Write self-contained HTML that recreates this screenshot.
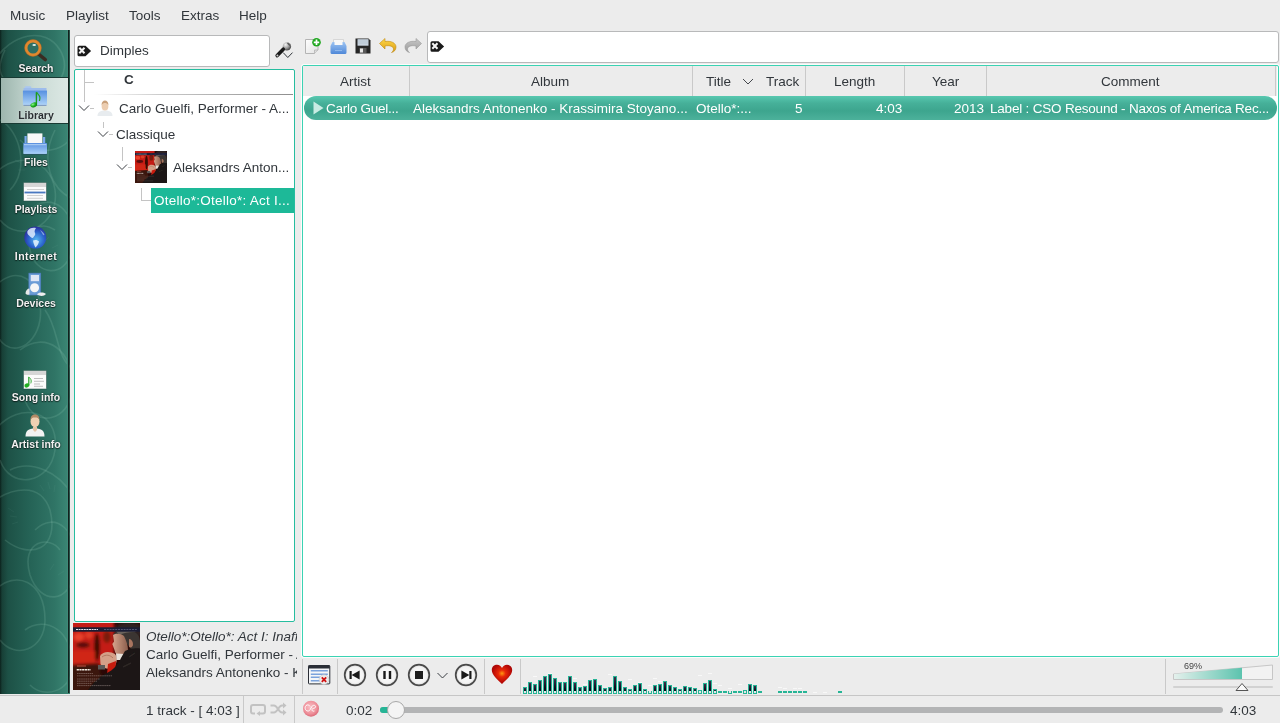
<!DOCTYPE html>
<html><head><meta charset="utf-8">
<style>
*{box-sizing:border-box;margin:0;padding:0}
html,body{width:1280px;height:723px;overflow:hidden;background:#ececec;font-family:"Liberation Sans",sans-serif;color:#31363b;font-size:13.5px}
.a{position:absolute;white-space:nowrap}
svg{position:absolute;overflow:visible}
#menu span{position:absolute;top:8px;font-size:13.5px;color:#31363b;line-height:16px}
#side{position:absolute;left:0;top:30px;width:70px;height:664px;background:linear-gradient(90deg,#0c211c 0px,#173f36 2px,#1d5146 8px,#256356 30px,#307566 55px,#3a8573 67px);overflow:hidden}
.si{position:absolute;left:1.5px;width:69px;text-align:center;color:#f2f2f2;font-weight:bold;font-size:10.5px;line-height:12px;text-shadow:0 0 2px rgba(0,0,0,.7),0 1px 1px rgba(0,0,0,.5)}
.panel{position:absolute;background:#fff;border:1px solid #26bd9f;border-radius:2px}
.t{position:absolute;white-space:nowrap;font-size:13.5px;color:#31363b;line-height:16px}
.hd{position:absolute;top:74px;font-size:13.5px;line-height:16px;color:#31363b;white-space:nowrap}
.sep{position:absolute;background:#c9c9c9;width:1px}
.rw{position:absolute;top:101px;font-size:13.5px;line-height:16px;color:#fff;white-space:nowrap}
#an i{position:absolute;width:4px;display:block}
#an i.b{border:1px solid #26b596;border-bottom-width:1px;background:linear-gradient(180deg,#3a2f4a,#0b0818 70%)}
#an i.b:after{content:"";position:absolute;left:0;right:0;bottom:0;height:2px;background:#e6e6e6}
</style></head>
<body><div id="root" style="position:absolute;left:0;top:0;width:1280px;height:723px;background:#ececec;will-change:transform;overflow:hidden">
<div id="menu">
<span style="left:10px">Music</span>
<span style="left:66px">Playlist</span>
<span style="left:129px">Tools</span>
<span style="left:181px">Extras</span>
<span style="left:239px">Help</span>
</div>
<div id="side">
 <svg width="70" height="663" style="left:0;top:0" viewBox="0 0 70 663">
  <defs><filter id="pb"><feGaussianBlur stdDeviation=".45"/></filter></defs>
  <g fill="none" stroke="#a6dccb" stroke-opacity=".15" stroke-width="1.6" filter="url(#pb)">
   <path d="M-5 30 C10 5 45 -5 60 20 C75 45 50 70 20 60 C0 52 -5 40 5 20"/>
   <path d="M15 70 C30 50 70 60 75 90 C78 120 40 130 20 110"/>
   <path d="M-10 150 C10 120 50 125 55 160 C60 195 20 215 0 190"/>
   <path d="M30 180 C50 160 80 180 72 220 C65 250 35 245 30 220 C25 200 40 190 55 200"/>
   <path d="M-8 260 C15 230 45 250 40 290 C35 320 5 330 -5 300"/>
   <path d="M20 320 C45 300 75 320 72 360 C70 390 35 400 25 370"/>
   <path d="M-5 400 C20 370 60 380 55 420 C50 455 10 460 0 430"/>
   <path d="M10 440 C30 430 60 440 75 470 M-5 470 C10 460 40 450 50 480 C60 520 30 530 5 510"/>
   <path d="M35 500 C55 480 80 500 75 540 C70 575 40 575 30 545 C20 510 50 505 60 520"/>
   <path d="M-5 560 C15 540 45 550 45 590 C45 620 15 630 0 610"/>
   <path d="M25 600 C45 585 75 600 72 640 C70 660 45 670 30 655"/>
   <path d="M0 90 C20 100 30 140 10 160 M55 100 C40 130 50 160 75 170 M45 280 C60 300 55 330 75 340"/>
  </g>
  <g stroke="#a6dccb" stroke-opacity=".08" stroke-width=".8">
   <path d="M8 478 l6 4 M10 486 l7 1 M12 494 l6 -2 M40 455 l4 6 M48 452 l2 7 M55 455 l-1 7 M50 540 l4 -6 M58 545 l6 -4 M20 360 l6 4 M24 368 l7 1 M44 212 l5 -5 M52 218 l6 -3 M15 130 l6 3 M18 140 l7 0"/>
  </g>
  <rect x="67" y="0" width="1" height="663" fill="#3f8a78"/><rect x="68" y="0" width="1.5" height="663" fill="#13201d"/>
 </svg>
 <!-- selected Library -->
 <div style="position:absolute;left:1px;top:47px;width:67px;height:47px;background:linear-gradient(90deg,#9db6ae,#c9dad4 50%,#dce8e4);border-top:1px solid #183a33;border-bottom:1px solid #183a33"></div>
</div>

<!-- sidebar icons -->
<svg style="left:22px;top:38px" width="26" height="24" viewBox="0 0 26 24">
 <defs><linearGradient id="hg" x1="0" y1="0" x2="1" y2="0"><stop offset="0" stop-color="#6a5a48"/><stop offset="1" stop-color="#2a2018"/></linearGradient></defs>
 <line x1="16.5" y1="16" x2="23.3" y2="21.6" stroke="#3a2c22" stroke-width="3.4" stroke-linecap="round"/>
 <circle cx="11" cy="10" r="7" fill="#2f6f63" stroke="#e0882e" stroke-width="2.9"/>
 <circle cx="11" cy="10" r="8.4" fill="none" stroke="#b8601a" stroke-width=".6" opacity=".7"/>
 <ellipse cx="12.2" cy="6.9" rx="1.8" ry="1" fill="#f4fffc" opacity=".9"/>
</svg>
<div class="si" style="top:62px">Search</div>

<svg style="left:22px;top:85px" width="26" height="24" viewBox="0 0 26 24">
 <defs><linearGradient id="fg" x1="0" y1="0" x2="0" y2="1"><stop offset="0" stop-color="#5690e0"/><stop offset="1" stop-color="#acd2f8"/></linearGradient>
 <radialGradient id="ng" cx=".4" cy=".35" r=".7"><stop offset="0" stop-color="#8cf08c"/><stop offset=".5" stop-color="#22b822"/><stop offset="1" stop-color="#0a7a0a"/></radialGradient></defs>
 <rect x="2.8" y="1.2" width="6.5" height="4" rx="1" fill="#a9c6f0"/>
 <rect x="1.5" y="3" width="23" height="4" fill="#9dbcec"/>
 <rect x="0.9" y="5.6" width="24.1" height="14.3" fill="url(#fg)"/>
 <rect x="1.5" y="19.9" width="23" height="1" fill="#7c97bf"/>
 <path d="M14.4 7.2 v12.5" stroke="#1f9a1f" stroke-width="1.4"/>
 <path d="M14.4 7.2 c1 1.5 3.5 3 3.5 5.5 c0 1.2 -.3 2 -.5 3.3" stroke="#25a525" stroke-width="1.2" fill="none"/>
 <ellipse cx="11.7" cy="19.9" rx="3.4" ry="2.4" transform="rotate(-20 11.7 19.9)" fill="url(#ng)"/>
</svg>
<div class="si" style="top:109px;color:#2b2f33;text-shadow:0 0 2px rgba(255,255,255,.6)">Library</div>

<svg style="left:23px;top:132px" width="25" height="23" viewBox="0 0 25 23">
 <defs><linearGradient id="tg" x1="0" y1="0" x2="0" y2="1"><stop offset="0" stop-color="#5a90e0"/><stop offset="1" stop-color="#aad2fa"/></linearGradient></defs>
 <rect x="1.5" y="4" width="2.2" height="8" fill="#7aa8ec"/>
 <rect x="20" y="5" width="2.2" height="7" fill="#7aa8ec"/>
 <rect x="4.4" y="1.4" width="15" height="10" fill="#f8f8f8"/>
 <rect x="0.3" y="11.1" width="23.7" height="10.8" rx=".6" fill="url(#tg)"/>
 <rect x="1" y="12.2" width="22.3" height="1" fill="#b6d4f6"/>
 <rect x="0.8" y="21.9" width="23" height="1" fill="#2a4a6a" opacity=".5"/>
</svg>
<div class="si" style="top:156px">Files</div>

<svg style="left:23px;top:182px" width="24" height="20" viewBox="0 0 24 20">
 <rect x="0.5" y="0.5" width="23" height="18.5" fill="#fbfbfb" stroke="#1e4a40" stroke-opacity=".5" stroke-width="1"/>
 <rect x="1" y="1" width="22" height="4" fill="#d6d6d6"/>
 <path d="M4 7.5 h17 M4 13.5 h16 M4 16.3 h16" stroke="#c4c4c4" stroke-width=".8"/>
 <rect x="1.5" y="9.6" width="21" height="1.8" fill="#4a78c0"/>
</svg>
<div class="si" style="top:203px">Playlists</div>

<svg style="left:23px;top:225px" width="24" height="24" viewBox="0 0 24 24">
 <defs><radialGradient id="gl" cx=".55" cy=".6" r=".6"><stop offset="0" stop-color="#58b8f0"/><stop offset=".6" stop-color="#2a62cc"/><stop offset="1" stop-color="#2a2c9c"/></radialGradient>
 <filter id="gb"><feGaussianBlur stdDeviation=".5"/></filter></defs>
 <circle cx="12.3" cy="12.6" r="11" fill="url(#gl)"/>
 <g filter="url(#gb)" fill="#dfeeff" opacity=".85">
  <path d="M4.5 6 C6 3 10 2 13 3 C12 5 11 6 12 8 C13 10 11 11 10 13 C8 13 7 11 5.5 10 C4.5 9 4 7.5 4.5 6z"/>
  <path d="M10 15.5 C12 14.5 15 15 16 16.5 C15.5 19 14 21 12.5 22.5 C11.5 21 10.5 18.5 10 15.5z" fill="#eaf6ff"/>
  <path d="M17 5 C19 6 21 8 21.5 10 C20.5 10.5 19.5 9.5 19 8 z" opacity=".6"/>
 </g>
</svg>
<div class="si" style="top:250px;letter-spacing:.5px">Internet</div>

<svg style="left:24px;top:272px" width="23" height="25" viewBox="0 0 23 25">
 <rect x="4.9" y="1.2" width="11.8" height="21.8" fill="#6b9cd6"/>
 <rect x="4.9" y="1.2" width="11.8" height="21.8" fill="none" stroke="#4e7cc0" stroke-width=".7"/>
 <rect x="6.8" y="3" width="8.2" height="6.2" fill="#dfe6f5"/>
 <circle cx="10.6" cy="15.7" r="4.5" fill="#f6f6f6"/>
 <path d="M1.5 21.5 c0-3 2-5 4-5 l0 6 c-1.5 .5 -3 .5 -4 -1z" fill="#e8e8e8"/>
 <path d="M13 22.5 c2-2.5 6-2.5 9-.5 c-2 2.5 -6 2.5 -9 .5z" fill="#eeeeee"/>
</svg>
<div class="si" style="top:297px">Devices</div>

<svg style="left:23px;top:370px" width="24" height="20" viewBox="0 0 24 20">
 <rect x="0.5" y="0.5" width="23" height="18.5" fill="#fbfbfb" stroke="#1e4a40" stroke-opacity=".5" stroke-width="1"/>
 <rect x="1" y="1" width="22" height="4" fill="#d6d6d6"/>
 <path d="M11 8.5 h9 M11 11.3 h10 M11 14 h6 M11 16.3 h9" stroke="#b0b0b0" stroke-width=".8"/>
 <path d="M5.8 7 v8.3" stroke="#2aa02a" stroke-width="1.2"/>
 <path d="M5.8 7 c1 1 2.4 2 2.4 4 c0 1 -.2 1.6 -.4 2.4" stroke="#3ab03a" stroke-width="1" fill="none"/>
 <ellipse cx="3.9" cy="15.4" rx="2.6" ry="2" transform="rotate(-25 3.9 15.4)" fill="#22b022"/>
</svg>
<div class="si" style="top:391px">Song info</div>

<svg style="left:25px;top:414px" width="20" height="23" viewBox="0 0 20 23">
 <path d="M0.5 22.5 c0-6 3-8 9.5-8 s9.5 2 9.5 8z" fill="#f2f2f2"/>
 <path d="M8 13 h4 v3 l-2 2 l-2 -2z" fill="#e5c3a5"/>
 <ellipse cx="10" cy="7.5" rx="4.5" ry="5.8" fill="#efd0b2"/>
 <path d="M5.5 6 c0-4 2-5.5 4.5-5.5 s4.5 1.5 4.5 5.5 c-1-2 -2-2.5 -4.5-2.5 s-3.5 .5 -4.5 2.5z" fill="#b38a66"/>
</svg>
<div class="si" style="top:438px">Artist info</div>
<!-- library search -->
<div class="a" style="left:74px;top:35px;width:196px;height:32px;background:#fff;border:1px solid #b8b9ba;border-radius:3px"></div>
<svg style="left:77px;top:45px" width="15" height="12" viewBox="0 0 15 11">
 <path d="M2 0.2 h6.5 l5.6 5.3 l-5.6 5.3 h-6.5 q-1.5 0 -1.5 -1.5 v-7.6 q0 -1.5 1.5 -1.5z" fill="#1a1a1a"/>
 <path d="M2.3 2.2 l5.2 5.6 M7.5 2.2 l-5.2 5.6" stroke="#f4f4f4" stroke-width="2"/>
</svg>
<div class="t" style="left:100px;top:43px">Dimples</div>

<!-- wrench -->
<svg style="left:274px;top:41px" width="20" height="18" viewBox="0 0 20 18">
 <defs><radialGradient id="wg" cx=".35" cy=".3" r=".7"><stop offset="0" stop-color="#f4f4f4"/><stop offset=".6" stop-color="#9a9a9a"/><stop offset="1" stop-color="#4a4a4a"/></radialGradient></defs>
 <circle cx="12.9" cy="5.4" r="4.2" fill="url(#wg)"/>
 <path d="M13.5 2 l2.5 2.5" stroke="#555" stroke-width="1.2"/>
 <path d="M9.3 8.2 L3.2 14.6" stroke="#1a1a1a" stroke-width="3.6" stroke-linecap="round"/>
 <circle cx="3.4" cy="14.4" r="1" fill="#cfcfcf"/>
 <path d="M9.2 11.6 l4.6 4.9 l4.7 -4.9" stroke="#31363b" stroke-width="1" fill="none"/>
</svg>

<!-- library tree -->
<div class="panel" style="left:74px;top:69px;width:221px;height:553px"></div>
<div class="a" style="left:84px;top:70px;width:1px;height:32px;background:#c4c4c4"></div>
<div class="a" style="left:84px;top:82px;width:10px;height:1px;background:#c4c4c4"></div>
<div class="t" style="left:124px;top:72px;font-weight:bold">C</div>
<div class="a" style="left:94px;top:94px;width:199px;height:1px;background:linear-gradient(90deg,#ffffff,#c8c8c8 35%,#8e8e8e)"></div>

<svg style="left:78px;top:104px" width="18" height="9" viewBox="0 0 18 9">
 <path d="M1 1.5 l5 5 l5 -5" stroke="#31363b" stroke-width=".95" fill="none"/>
 <path d="M12 4.5 h4" stroke="#c4c4c4" stroke-width="1"/>
</svg>
<svg style="left:97px;top:100px" width="16" height="17" viewBox="0 0 16 17">
 <path d="M0.5 16 c0-4 3-5.5 7.5-5.5 s7.5 1.5 7.5 5.5z" fill="#e8ecef"/>
 <ellipse cx="8" cy="6" rx="3.4" ry="4.6" fill="#eccdb0"/>
 <path d="M4.6 5 c0-3 1.5-4.5 3.4-4.5 s3.4 1.5 3.4 4.5 c-1-1.5 -2-2 -3.4-2 s-2.5 .5 -3.4 2z" fill="#c9a07a"/>
</svg>
<div class="t" style="left:119px;top:101px">Carlo Guelfi, Performer - A...</div>

<div class="a" style="left:103px;top:122px;width:1px;height:6px;background:#c4c4c4"></div>
<svg style="left:97px;top:130px" width="18" height="9" viewBox="0 0 18 9">
 <path d="M1 1.5 l5 5 l5 -5" stroke="#31363b" stroke-width=".95" fill="none"/>
 <path d="M12 4.5 h4" stroke="#c4c4c4" stroke-width="1"/>
</svg>
<div class="t" style="left:116px;top:127px">Classique</div>

<div class="a" style="left:122px;top:147px;width:1px;height:14px;background:#c4c4c4"></div>
<svg style="left:116px;top:163px" width="18" height="9" viewBox="0 0 18 9">
 <path d="M1 1.5 l5 5 l5 -5" stroke="#31363b" stroke-width=".95" fill="none"/>
 <path d="M12 4.5 h4" stroke="#c4c4c4" stroke-width="1"/>
</svg>
<svg style="left:135px;top:151px;overflow:hidden" width="32" height="32" viewBox="0 0 67 67"> <defs><filter id="bl_t" x="-20%" y="-20%" width="140%" height="140%"><feGaussianBlur stdDeviation="1.5"/></filter>
 <filter id="bl2_t"><feGaussianBlur stdDeviation=".45"/></filter>
 <linearGradient id="fc_t" x1="0" y1="0" x2="1" y2="0"><stop offset="0" stop-color="#d8a48c"/><stop offset="1" stop-color="#8c5e4c"/></linearGradient></defs>
 <rect width="67" height="67" fill="#2a0806"/>
 <g filter="url(#bl_t)">
  <rect x="-3" y="-3" width="44" height="46" fill="#c41e12"/>
  <ellipse cx="6" cy="14" rx="5" ry="4" fill="#e8402a"/>
  <ellipse cx="16" cy="12" rx="4" ry="3.5" fill="#e03a26"/>
  <ellipse cx="10" cy="22" rx="7" ry="3" fill="#5a0e08"/>
  <ellipse cx="24" cy="24" rx="3" ry="14" fill="#3a0a06"/>
  <ellipse cx="34" cy="14" rx="4" ry="6" fill="#7a1a10"/>
  <rect x="0" y="28" width="22" height="12" fill="#d02818"/>
  <path d="M-3 42 L26 40 L30 70 L-3 70z" fill="#3a1410"/>
  <ellipse cx="56" cy="8" rx="14" ry="9" fill="#2e2420"/>
 </g>
 <g filter="url(#bl2_t)">
  <path d="M40 12 C43 7 52 6 59 8 C65 10 67 14 67 18 L67 27 L58 26 C55 22 52 18 47 14z" fill="#3a3430"/>
  <path d="M43 8 C50 5.5 58 6 64 9 C58 8.5 51 9.5 46 12z" fill="#6a625c"/>
  <path d="M40 12 C43 10 48 10.5 51 13 C53 17 55 22 55 27 C54 31 51 34 47 34 C44 33 42 30 41.5 27 L39.3 21 L41 18.5z" fill="url(#fc_t)"/>
  <path d="M56 16 C58 16 60 18 60 21 C60 24 58 25 56 24z" fill="#a8745e"/>
  <path d="M27 33 C30 28 37 28 42 31 C45 35 44 41 40 45 C36 46.5 30 46 27.5 41z" fill="#d4a088"/>
  <path d="M29 34 C33 31 37 32 40 35" stroke="#a87058" stroke-width=".8" fill="none"/>
  <path d="M43 30.5 L52 31 L50 37 L43.5 37z" fill="#e8e2da"/>
  <path d="M35 41 L43 38 L42 52 L34 51z" fill="#c81a10"/>
  <path d="M52 28 C58 25 63 25 67 25.5 L67 67 L15 67 C20 60 27 53 34 50 C40 47 45 42 48 35z" fill="#1a1614"/>
  <path d="M56 34 L62 30 M50 44 L58 40" stroke="#2e2826" stroke-width="1.5"/>
  <path d="M25 42 L32 42 L32 46.5 L25 46.5z" fill="#5a5a58"/>
 </g>
 <rect x="0" y="4.3" width="67" height="4.4" fill="#1a1c34"/>
 <path d="M3 6.5 h22" stroke="#e8e8f0" stroke-width="1.1" stroke-dasharray="2 .6"/>
 <path d="M31 6.5 h33" stroke="#7a7a98" stroke-width=".6" stroke-dasharray="2 .8"/>
 <path d="M4 43 h9" stroke="#d86050" stroke-width=".8"/>
 <path d="M3.7 46.8 h14" stroke="#f0ece4" stroke-width="1.5" stroke-dasharray="2.2 .5"/>
 <path d="M4 50.5 h16 M4 52.8 h35 M4 56 h23 M4 58.2 h20 M4 60.4 h15 M4 62.6 h34" stroke="#b8a8a4" stroke-width=".55" stroke-opacity=".8" stroke-dasharray="1.6 .5"/>
</svg>
<div class="t" style="left:173px;top:160px">Aleksandrs Anton...</div>

<div class="a" style="left:141px;top:188px;width:1px;height:12px;background:#c4c4c4"></div>
<div class="a" style="left:141px;top:200px;width:10px;height:1px;background:#c4c4c4"></div>
<div class="a" style="left:151px;top:188px;width:143px;height:25px;background:#1db998"></div>
<div class="t" style="left:154px;top:193px;color:#fff;letter-spacing:.25px">Otello*:Otello*: Act I...</div>

<!-- now playing -->
<svg style="left:73px;top:623px;overflow:hidden" width="67" height="67" viewBox="0 0 67 67"> <defs><filter id="bl" x="-20%" y="-20%" width="140%" height="140%"><feGaussianBlur stdDeviation="1.5"/></filter>
 <filter id="bl2"><feGaussianBlur stdDeviation=".45"/></filter>
 <linearGradient id="fc" x1="0" y1="0" x2="1" y2="0"><stop offset="0" stop-color="#d8a48c"/><stop offset="1" stop-color="#8c5e4c"/></linearGradient></defs>
 <rect width="67" height="67" fill="#2a0806"/>
 <g filter="url(#bl)">
  <rect x="-3" y="-3" width="44" height="46" fill="#c41e12"/>
  <ellipse cx="6" cy="14" rx="5" ry="4" fill="#e8402a"/>
  <ellipse cx="16" cy="12" rx="4" ry="3.5" fill="#e03a26"/>
  <ellipse cx="10" cy="22" rx="7" ry="3" fill="#5a0e08"/>
  <ellipse cx="24" cy="24" rx="3" ry="14" fill="#3a0a06"/>
  <ellipse cx="34" cy="14" rx="4" ry="6" fill="#7a1a10"/>
  <rect x="0" y="28" width="22" height="12" fill="#d02818"/>
  <path d="M-3 42 L26 40 L30 70 L-3 70z" fill="#3a1410"/>
  <ellipse cx="56" cy="8" rx="14" ry="9" fill="#2e2420"/>
 </g>
 <g filter="url(#bl2)">
  <path d="M40 12 C43 7 52 6 59 8 C65 10 67 14 67 18 L67 27 L58 26 C55 22 52 18 47 14z" fill="#3a3430"/>
  <path d="M43 8 C50 5.5 58 6 64 9 C58 8.5 51 9.5 46 12z" fill="#6a625c"/>
  <path d="M40 12 C43 10 48 10.5 51 13 C53 17 55 22 55 27 C54 31 51 34 47 34 C44 33 42 30 41.5 27 L39.3 21 L41 18.5z" fill="url(#fc)"/>
  <path d="M56 16 C58 16 60 18 60 21 C60 24 58 25 56 24z" fill="#a8745e"/>
  <path d="M27 33 C30 28 37 28 42 31 C45 35 44 41 40 45 C36 46.5 30 46 27.5 41z" fill="#d4a088"/>
  <path d="M29 34 C33 31 37 32 40 35" stroke="#a87058" stroke-width=".8" fill="none"/>
  <path d="M43 30.5 L52 31 L50 37 L43.5 37z" fill="#e8e2da"/>
  <path d="M35 41 L43 38 L42 52 L34 51z" fill="#c81a10"/>
  <path d="M52 28 C58 25 63 25 67 25.5 L67 67 L15 67 C20 60 27 53 34 50 C40 47 45 42 48 35z" fill="#1a1614"/>
  <path d="M56 34 L62 30 M50 44 L58 40" stroke="#2e2826" stroke-width="1.5"/>
  <path d="M25 42 L32 42 L32 46.5 L25 46.5z" fill="#5a5a58"/>
 </g>
 <rect x="0" y="4.3" width="67" height="4.4" fill="#1a1c34"/>
 <path d="M3 6.5 h22" stroke="#e8e8f0" stroke-width="1.1" stroke-dasharray="2 .6"/>
 <path d="M31 6.5 h33" stroke="#7a7a98" stroke-width=".6" stroke-dasharray="2 .8"/>
 <path d="M4 43 h9" stroke="#d86050" stroke-width=".8"/>
 <path d="M3.7 46.8 h14" stroke="#f0ece4" stroke-width="1.5" stroke-dasharray="2.2 .5"/>
 <path d="M4 50.5 h16 M4 52.8 h35 M4 56 h23 M4 58.2 h20 M4 60.4 h15 M4 62.6 h34" stroke="#b8a8a4" stroke-width=".55" stroke-opacity=".8" stroke-dasharray="1.6 .5"/>
</svg>
<div style="position:absolute;left:146px;top:627px;width:150.5px;height:60px;overflow:hidden">
 <div class="t" style="left:0;top:2px;font-style:italic">Otello*:Otello*: Act I: Inaffia l'ugola</div>
 <div class="t" style="left:0;top:20px">Carlo Guelfi, Performer - Aleksandrs</div>
 <div class="t" style="left:0;top:38px">Aleksandrs Antonenko - Krassimira</div>
</div>
<!-- playlist toolbar -->
<svg style="left:304px;top:38px" width="18" height="17" viewBox="0 0 18 17">
 <defs><linearGradient id="dg" x1="0" y1="0" x2="1" y2="1"><stop offset="0" stop-color="#ffffff"/><stop offset="1" stop-color="#e2e2e2"/></linearGradient></defs>
 <path d="M1.5 1.5 h9 l3.5 3.5 v7 l-3.5 3.5 h-9z" fill="url(#dg)" stroke="#b4b4b4" stroke-width="1"/>
 <path d="M10.5 15.5 l0 -3.5 h3.5" fill="#ddd" stroke="#b4b4b4" stroke-width=".8"/>
 <circle cx="12.5" cy="4.3" r="4.3" fill="#22a822"/>
 <path d="M12.5 1.6 v5.4 M9.8 4.3 h5.4" stroke="#fff" stroke-width="1.7"/>
</svg>
<svg style="left:330px;top:39px" width="17" height="15" viewBox="0 0 17 15">
 <defs><linearGradient id="pg" x1="0" y1="0" x2="0" y2="1"><stop offset="0" stop-color="#9cc3f2"/><stop offset="1" stop-color="#4f88d8"/></linearGradient></defs>
 <path d="M3.5 0.5 h10 v6 h-10z" fill="#f8f8f8" stroke="#cfcfcf" stroke-width=".8"/>
 <path d="M2.5 3 h2 v3 h8 v-3 h2 l2 4 v6.5 q0 1.5 -1.5 1.5 h-13 q-1.5 0 -1.5 -1.5 v-6.5z" fill="url(#pg)"/>
 <path d="M5 11.5 h7" stroke="#8fb8ec" stroke-width="1"/>
</svg>
<svg style="left:355px;top:38px" width="16" height="16" viewBox="0 0 16 16">
 <path d="M0.5 0.5 h13 l2 2 v13 h-15z" fill="#262626"/>
 <rect x="2.5" y="1.2" width="11" height="6.5" fill="#c9d4e0"/>
 <path d="M3 3 h10 M3 5 h10" stroke="#aab8c8" stroke-width=".6"/>
 <rect x="4.5" y="10" width="7" height="5" fill="#5a5a5a"/>
 <rect x="5" y="10.5" width="3" height="4" fill="#e8e8e8"/>
</svg>
<svg style="left:379px;top:38px" width="18" height="14" viewBox="0 0 18 14">
 <defs><linearGradient id="ug" x1="0" y1="0" x2="0" y2="1"><stop offset="0" stop-color="#ffd84a"/><stop offset="1" stop-color="#d89a10"/></linearGradient></defs>
 <path d="M0.5 5.5 l5.5 -5 v3 c6 -1 11 1.5 11 5.5 c0 3 -2 5 -4.5 5.5 c1.5 -1 2 -2.5 2 -3.5 c0 -2.5 -3.5 -4 -8.5 -3 v3z" fill="url(#ug)" stroke="#c08a12" stroke-width=".6"/>
</svg>
<svg style="left:404px;top:38px" width="18" height="14" viewBox="0 0 18 14">
 <defs><linearGradient id="rg" x1="0" y1="0" x2="0" y2="1"><stop offset="0" stop-color="#c8c8c8"/><stop offset="1" stop-color="#9a9a9a"/></linearGradient></defs>
 <path d="M17.5 5.5 l-5.5 -5 v3 c-6 -1 -11 1.5 -11 5.5 c0 3 2 5 4.5 5.5 c-1.5 -1 -2 -2.5 -2 -3.5 c0 -2.5 3.5 -4 8.5 -3 v3z" fill="url(#rg)" stroke="#999" stroke-width=".6"/>
</svg>

<!-- playlist filter -->
<div class="a" style="left:427px;top:31px;width:852px;height:32px;background:#fff;border:1px solid #b8b9ba;border-radius:3px"></div>
<svg style="left:430px;top:41px" width="15" height="12" viewBox="0 0 15 12">
 <path d="M2 0.2 h6.5 l5.6 5.3 l-5.6 5.3 h-6.5 q-1.5 0 -1.5 -1.5 v-7.6 q0 -1.5 1.5 -1.5z" fill="#1a1a1a"/>
 <path d="M2.3 2.2 l5.2 5.6 M7.5 2.2 l-5.2 5.6" stroke="#f4f4f4" stroke-width="2"/>
</svg>

<!-- playlist panel -->
<div class="panel" style="left:302px;top:65px;width:977px;height:592px;border-color:#3bd3b3;box-shadow:0 0 0 1px rgba(255,255,255,.85)"></div>
<div class="a" style="left:303px;top:66px;width:974px;height:30px;background:#ececec"></div>
<div class="sep" style="left:409px;top:66px;height:30px"></div>
<div class="sep" style="left:692px;top:66px;height:30px"></div>
<div class="sep" style="left:805px;top:66px;height:30px"></div>
<div class="sep" style="left:904px;top:66px;height:30px"></div>
<div class="sep" style="left:986px;top:66px;height:30px"></div>
<div class="sep" style="left:1275px;top:66px;height:30px"></div>
<div class="hd" style="left:340px">Artist</div>
<div class="hd" style="left:531px">Album</div>
<div class="hd" style="left:706px">Title</div>
<svg style="left:742px;top:78px" width="12" height="7" viewBox="0 0 12 7"><path d="M1 1 l5 5 l5 -5" stroke="#31363b" stroke-width=".9" fill="none"/></svg>
<div class="hd" style="left:766px">Track</div>
<div class="hd" style="left:834px">Length</div>
<div class="hd" style="left:932px">Year</div>
<div class="hd" style="left:1101px">Comment</div>

<div class="a" style="left:304px;top:96px;width:973px;height:24px;border-radius:12px;background:linear-gradient(180deg,#58c8b0 0%,#46b099 30%,#3da58e 62%,#4cb19b 100%)"></div>
<svg style="left:313px;top:101px" width="11" height="14" viewBox="0 0 11 14"><path d="M0.5 0.5 l10 6.5 l-10 6.5z" fill="#c8ece3"/></svg>
<div class="rw" style="left:326px;letter-spacing:-.25px">Carlo Guel...</div>
<div class="rw" style="left:413px">Aleksandrs Antonenko - Krassimira Stoyano...</div>
<div class="rw" style="left:696px">Otello*:...</div>
<div class="rw" style="left:795px">5</div>
<div class="rw" style="left:876px">4:03</div>
<div class="rw" style="left:954px">2013</div>
<div class="rw" style="left:990px;letter-spacing:-.2px">Label : CSO Resound - Naxos of America Rec...</div>
<!-- player bar -->
<div class="sep" style="left:302px;top:659px;height:35px"></div>
<div class="sep" style="left:337px;top:659px;height:35px"></div>
<div class="sep" style="left:484px;top:659px;height:35px"></div>
<div class="sep" style="left:520px;top:659px;height:35px"></div>
<div class="sep" style="left:1165px;top:659px;height:35px"></div>

<svg style="left:308px;top:665px" width="23" height="21" viewBox="0 0 23 21">
 <rect x="0.5" y="0.5" width="21.3" height="18.4" rx=".8" fill="#f4f6f8" stroke="#2a2e36" stroke-width="1"/>
 <rect x="0.5" y="0.5" width="21.3" height="3" fill="#2a2e36"/>
 <path d="M2.8 5.8 h17 M2.8 9.2 h17 M2.8 12.3 h12 M2.8 15.8 h10" stroke="#7aa2dc" stroke-width="1.5"/>
 <circle cx="16" cy="14.6" r="4.9" fill="#ececec" stroke="#c4c4c4" stroke-width=".6"/>
 <path d="M13.8 12.4 l4.4 4.4 M18.2 12.4 l-4.4 4.4" stroke="#d01212" stroke-width="1.8"/>
</svg>

<svg style="left:343px;top:663px" width="24" height="24" viewBox="0 0 24 24">
 <defs><radialGradient id="bgr" cx=".5" cy=".5" r=".5"><stop offset="0" stop-color="#fafafa"/><stop offset=".75" stop-color="#f4f4f4"/><stop offset="1" stop-color="#d8d8d8"/></radialGradient></defs>
 <circle cx="12" cy="12" r="10.3" fill="url(#bgr)" stroke="#4a4a4a" stroke-width="1.7"/>
 <path d="M7.6 8 v8" stroke="#1a1a1a" stroke-width="2.2"/>
 <path d="M16.6 7.5 l-8 4.5 l8 4.5z" fill="#1a1a1a"/>
</svg>
<svg style="left:375px;top:663px" width="24" height="24" viewBox="0 0 24 24">
 <circle cx="12" cy="12" r="10.3" fill="url(#bgr)" stroke="#4a4a4a" stroke-width="1.7"/>
 <path d="M9.5 8 v8 M15 8 v8" stroke="#1a1a1a" stroke-width="2.4"/>
</svg>
<svg style="left:407px;top:663px" width="24" height="24" viewBox="0 0 24 24">
 <circle cx="12" cy="12" r="10.3" fill="url(#bgr)" stroke="#4a4a4a" stroke-width="1.7"/>
 <rect x="8" y="8" width="8" height="8" fill="#1e1e1e"/>
</svg>
<svg style="left:437px;top:672px" width="11" height="7" viewBox="0 0 11 7"><path d="M0.5 1 l5 5 l5 -5" stroke="#31363b" stroke-width=".95" fill="none"/></svg>
<svg style="left:454px;top:663px" width="24" height="24" viewBox="0 0 24 24">
 <circle cx="12" cy="12" r="10.3" fill="url(#bgr)" stroke="#4a4a4a" stroke-width="1.7"/>
 <path d="M16.4 8 v8" stroke="#1a1a1a" stroke-width="2.2"/>
 <path d="M7.4 7.5 l8 4.5 l-8 4.5z" fill="#1a1a1a"/>
</svg>

<svg style="left:491px;top:664px" width="22" height="21" viewBox="0 0 22 21">
 <defs><radialGradient id="ht" cx=".5" cy=".45" r=".6"><stop offset="0" stop-color="#ff9a10"/><stop offset=".3" stop-color="#e82808"/><stop offset=".75" stop-color="#b80a06"/><stop offset="1" stop-color="#a00606"/></radialGradient></defs>
 <path d="M11 20 C6 15 0.8 11 0.8 6 C0.8 2.5 3.3 0.8 6 0.8 C8.5 0.8 10 2.5 11 4 C12 2.5 13.5 0.8 16 0.8 C18.7 0.8 21.2 2.5 21.2 6 C21.2 11 16 15 11 20z" fill="url(#ht)"/>
</svg>

<div id="an">
<i style="left:533px;top:676px;height:1px;background:#f8f8f8"></i><i style="left:548px;top:673px;height:1px;background:#f8f8f8"></i><i style="left:573px;top:678px;height:1px;background:#f8f8f8"></i><i style="left:583px;top:684px;height:1px;background:#f8f8f8"></i><i style="left:608px;top:674px;height:1px;background:#f8f8f8"></i><i style="left:613px;top:676px;height:1px;background:#f8f8f8"></i><i style="left:628px;top:679px;height:1px;background:#f8f8f8"></i><i style="left:638px;top:682px;height:1px;background:#f8f8f8"></i><i style="left:648px;top:685px;height:1px;background:#f8f8f8"></i><i style="left:653px;top:678px;height:1px;background:#f8f8f8"></i><i style="left:658px;top:681px;height:1px;background:#f8f8f8"></i><i style="left:698px;top:675px;height:1px;background:#f8f8f8"></i><i style="left:708px;top:673px;height:1px;background:#f8f8f8"></i><i style="left:713px;top:683px;height:1px;background:#f8f8f8"></i><i style="left:718px;top:685px;height:1px;background:#f8f8f8"></i><i style="left:728px;top:688px;height:1px;background:#f8f8f8"></i><i style="left:738px;top:684px;height:1px;background:#f8f8f8"></i><i style="left:778px;top:687px;height:1px;background:#f8f8f8"></i><i style="left:783px;top:688px;height:1px;background:#f8f8f8"></i><i style="left:793px;top:688px;height:1px;background:#f8f8f8"></i><i style="left:798px;top:688px;height:1px;background:#f8f8f8"></i><i style="left:813px;top:692px;height:1px;background:#f8f8f8"></i><i style="left:823px;top:692px;height:1px;background:#f8f8f8"></i>
<i class="b" style="left:523px;top:687px;height:7px"></i>
<i class="b" style="left:528px;top:682px;height:12px"></i>
<i class="b" style="left:533px;top:684px;height:10px"></i>
<i class="b" style="left:538px;top:680px;height:14px"></i>
<i class="b" style="left:543px;top:676px;height:18px"></i>
<i class="b" style="left:548px;top:674px;height:20px"></i>
<i class="b" style="left:553px;top:678px;height:16px"></i>
<i class="b" style="left:558px;top:682px;height:12px"></i>
<i class="b" style="left:563px;top:682px;height:12px"></i>
<i class="b" style="left:568px;top:676px;height:18px"></i>
<i class="b" style="left:573px;top:682px;height:12px"></i>
<i class="b" style="left:578px;top:687px;height:7px"></i>
<i class="b" style="left:583px;top:686px;height:8px"></i>
<i class="b" style="left:588px;top:680px;height:14px"></i>
<i class="b" style="left:593px;top:679px;height:15px"></i>
<i class="b" style="left:598px;top:685px;height:9px"></i>
<i class="b" style="left:603px;top:688px;height:6px"></i>
<i class="b" style="left:608px;top:687px;height:7px"></i>
<i class="b" style="left:613px;top:676px;height:18px"></i>
<i class="b" style="left:618px;top:681px;height:13px"></i>
<i class="b" style="left:623px;top:687px;height:7px"></i>
<i class="b" style="left:628px;top:689px;height:5px"></i>
<i class="b" style="left:633px;top:685px;height:9px"></i>
<i class="b" style="left:638px;top:683px;height:11px"></i>
<i class="b" style="left:643px;top:689px;height:5px"></i>
<i class="b" style="left:648px;top:691px;height:3px"></i>
<i class="b" style="left:653px;top:685px;height:9px"></i>
<i class="b" style="left:658px;top:684px;height:10px"></i>
<i class="b" style="left:663px;top:681px;height:13px"></i>
<i class="b" style="left:668px;top:685px;height:9px"></i>
<i class="b" style="left:673px;top:687px;height:7px"></i>
<i class="b" style="left:678px;top:689px;height:5px"></i>
<i class="b" style="left:683px;top:686px;height:8px"></i>
<i class="b" style="left:688px;top:687px;height:7px"></i>
<i class="b" style="left:693px;top:688px;height:6px"></i>
<i class="b" style="left:698px;top:690px;height:4px"></i>
<i class="b" style="left:703px;top:683px;height:11px"></i>
<i class="b" style="left:708px;top:680px;height:14px"></i>
<i class="b" style="left:713px;top:689px;height:5px"></i>
<i style="left:718px;top:691px;height:2px;background:#26b596"></i>
<i style="left:723px;top:691px;height:2px;background:#26b596"></i>
<i class="b" style="left:728px;top:691px;height:3px"></i>
<i style="left:733px;top:691px;height:2px;background:#26b596"></i>
<i style="left:738px;top:691px;height:2px;background:#26b596"></i>
<i class="b" style="left:743px;top:690px;height:4px"></i>
<i class="b" style="left:748px;top:684px;height:10px"></i>
<i class="b" style="left:753px;top:685px;height:9px"></i>
<i style="left:758px;top:691px;height:2px;background:#26b596"></i>
<i style="left:778px;top:691px;height:2px;background:#26b596"></i>
<i style="left:783px;top:691px;height:2px;background:#26b596"></i>
<i style="left:788px;top:691px;height:2px;background:#26b596"></i>
<i style="left:793px;top:691px;height:2px;background:#26b596"></i>
<i style="left:798px;top:691px;height:2px;background:#26b596"></i>
<i style="left:803px;top:691px;height:2px;background:#26b596"></i>
<i style="left:838px;top:691px;height:2px;background:#26b596"></i>
</div>

<!-- volume -->
<div class="a" style="left:1184px;top:661px;font-size:9px;line-height:10px;color:#444">69%</div>
<svg style="left:1173px;top:664px" width="100" height="28" viewBox="0 0 100 28">
 <defs><linearGradient id="vg" x1="0" x2="1"><stop offset="0" stop-color="#e4f0ec"/><stop offset="1" stop-color="#5cc3ae"/></linearGradient></defs>
 <path d="M0.5 10 L99.5 1 V15.5 H0.5z" fill="#f2f2f2" stroke="#c6c6c6" stroke-width="1"/>
 <path d="M1 10 L69 3.8 V15 H1z" fill="url(#vg)"/>
 <rect x="0" y="22" width="100" height="2" rx="1" fill="#d2d2d2"/>
 <path d="M63 26.5 l6 -7 l6 7z" fill="#fafafa" stroke="#555" stroke-width="1"/>
</svg>

<!-- status bar -->
<div class="a" style="left:0;top:695px;width:1280px;height:1px;background:#c6c6c6"></div>

<div class="sep" style="left:243px;top:696px;height:27px"></div>
<div class="sep" style="left:294px;top:696px;height:27px"></div>
<div class="t" style="left:146px;top:703px">1 track - [ 4:03 ]</div>
<svg style="left:250px;top:703px" width="17" height="14" viewBox="0 0 17 14">
 <path d="M5 10.5 h-2 q-2 0 -2 -2 v-4.5 q0 -2 2 -2 h10 q2 0 2 2 v4.5 q0 2 -2 2 h-4" stroke="#c2c2c2" stroke-width="2" fill="none"/>
 <path d="M10 8 l-3.5 2.5 l3.5 2.5z" fill="#c2c2c2"/>
</svg>
<svg style="left:270px;top:702px" width="17" height="14" viewBox="0 0 17 14">
 <path d="M0.5 3.5 h3.5 c3.5 0 4.5 7 8 7 h2 M0.5 10.5 h3.5 c3.5 0 4.5 -7 8 -7 h2" stroke="#c2c2c2" stroke-width="2" fill="none"/>
 <path d="M13 0.5 l3.5 3 l-3.5 3z M13 7.5 l3.5 3 l-3.5 3z" fill="#c2c2c2"/>
</svg>
<svg style="left:302px;top:700px" width="18" height="18" viewBox="0 0 18 18">
 <defs><radialGradient id="lf" cx=".45" cy=".4" r=".6"><stop offset="0" stop-color="#fac0c6"/><stop offset=".7" stop-color="#ee909a"/><stop offset="1" stop-color="#dc6a78"/></radialGradient></defs>
 <circle cx="9" cy="8.7" r="8" fill="url(#lf)"/>
 <path d="M8 6.3 c-.8 -1.2 -2 -1.6 -3 -1.3 c-1.5 .5 -2 2 -1.8 3.6 c.3 1.6 1.5 2.5 3 2.4 c1 0 1.6 -.8 2.2 -1.8 l1.3 -2.4 c.6 -1 1.4 -1.6 2.5 -1.5 c1 .1 1.6 .9 1.4 1.7 c-.3 1 -1.6 1.2 -2.4 1.5 c-1 .4 -1.5 1 -1.2 1.8 c.4 .9 1.6 1 2.4 .7" stroke="#fff" stroke-width="1" fill="none"/>
</svg>
<div class="t" style="left:346px;top:703px">0:02</div>
<div class="a" style="left:380px;top:707px;width:843px;height:6px;border-radius:3px;background:#b3b4b5"></div>
<div class="a" style="left:380px;top:707px;width:16px;height:6px;border-radius:3px;background:#26b596"></div>
<div class="a" style="left:387px;top:701px;width:18px;height:18px;border-radius:50%;background:#f4f4f4;border:1px solid #a8a8a8"></div>
<div class="t" style="left:1230px;top:703px">4:03</div>
</div></body></html>
